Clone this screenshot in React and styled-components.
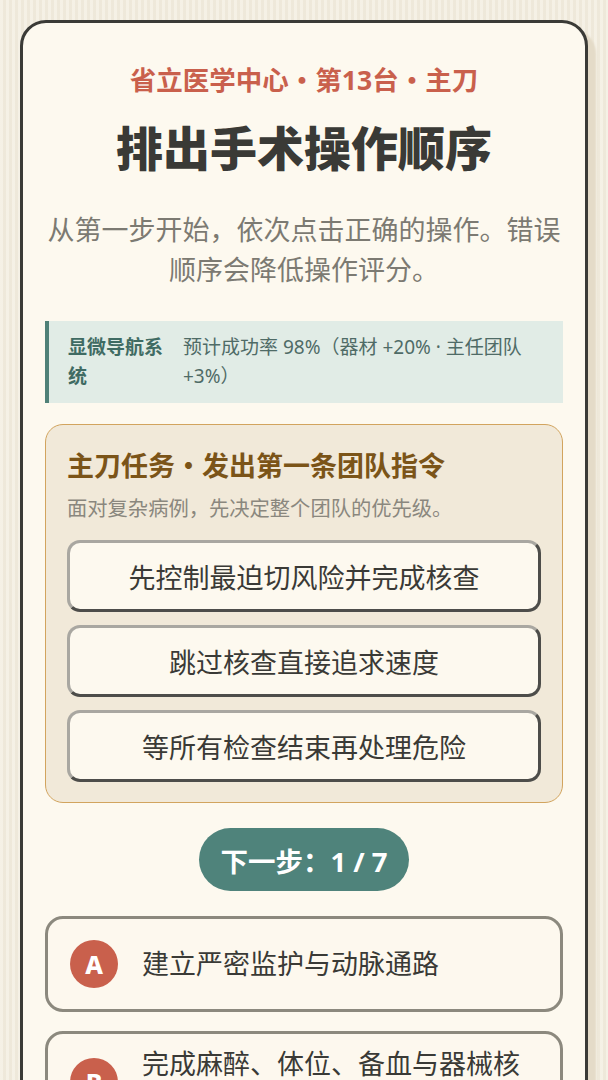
import React from 'react';
import styled, { createGlobalStyle } from 'styled-components';

const GlobalStyle = createGlobalStyle`
  * { box-sizing: border-box; }
  body {
    margin: 0;
    font-family: "Noto Sans", "Noto Sans CJK SC", sans-serif;
    background-color: #f2ecdd;
    background-image: repeating-linear-gradient(90deg, rgba(255,255,255,0.25) 0 3px, rgba(0,0,0,0.015) 3px 6px);
  }
`;

const Page = styled.div`
  padding: 20px 20px 40px;
`;

const Card = styled.main`
  background: #fdf9ef;
  border: 3px solid #3b3b37;
  border-radius: 26px;
  box-shadow: 8px 8px 2px #e4dbc8;
  padding: 40px 22px 30px;
`;

const Kicker = styled.div`
  text-align: center;
  color: #c9604c;
  font-weight: 700;
  font-size: 26.5px;
  line-height: 35px;
`;

const Title = styled.h1`
  margin: 20px 0 0;
  text-align: center;
  color: #3a3a36;
  font-weight: 900;
  font-size: 47px;
  line-height: 61px;
`;

const Lead = styled.p`
  margin: 31px 0 0;
  text-align: center;
  color: #7c7a72;
  font-size: 27px;
  line-height: 40px;
`;

const InfoBox = styled.div`
  margin-top: 31px;
  display: flex;
  gap: 15px;
  background: #e1ece6;
  border-left: 4px solid #4f8178;
  padding: 12px 16px 12px 19px;
  font-size: 19px;
  line-height: 29px;
`;

const InfoLabel = styled.div`
  flex: 0 0 100px;
  font-weight: 700;
  color: #3f6b63;
`;

const InfoValue = styled.div`
  flex: 1;
  color: #4f6b66;
`;

const TaskBox = styled.section`
  margin-top: 21px;
  background: #f1e9d9;
  border: 1.5px solid #d2a45e;
  border-radius: 18px;
  padding: 23px 21px 20px;
`;

const TaskTitle = styled.h2`
  margin: 0;
  color: #7b5418;
  font-weight: 700;
  font-size: 27px;
  line-height: 36px;
`;

const TaskHint = styled.p`
  margin: 10px 0 0;
  color: #8a877e;
  font-size: 20.3px;
  line-height: 28px;
`;

const ChoiceList = styled.div`
  margin-top: 18px;
  display: flex;
  flex-direction: column;
  gap: 13px;
`;

const Choice = styled.button`
  height: 72px;
  width: 100%;
  background: #fdf9ef;
  border: 3px solid;
  border-color: #a9a7a1 #4d4d4a #4d4d4a #a9a7a1;
  border-radius: 13px;
  font-family: inherit;
  font-size: 27px;
  color: #3a3a36;
  cursor: pointer;
`;

const PillRow = styled.div`
  margin-top: 25px;
  display: flex;
  justify-content: center;
`;

const NextPill = styled.div`
  width: 210px;
  height: 63px;
  border-radius: 32px;
  background: #4f837b;
  color: #fff;
  font-weight: 700;
  font-size: 27.5px;
  display: flex;
  align-items: center;
  justify-content: center;
`;

const StepList = styled.div`
  margin-top: 25px;
  display: flex;
  flex-direction: column;
  gap: 19px;
`;

const Step = styled.div`
  min-height: 96px;
  border: 3px solid #8c897e;
  border-radius: 18px;
  background: #fdf8ee;
  display: flex;
  align-items: center;
  gap: 24px;
  padding: 12px 22px;
`;

const Badge = styled.span`
  flex: 0 0 48px;
  height: 48px;
  border-radius: 50%;
  background: #c9604c;
  color: #fff;
  font-weight: 800;
  font-size: 25px;
  display: flex;
  align-items: center;
  justify-content: center;
`;

const StepText = styled.span`
  font-size: 27px;
  line-height: 36px;
  color: #3a3a36;
`;

const choices = [
  '先控制最迫切风险并完成核查',
  '跳过核查直接追求速度',
  '等所有检查结束再处理危险',
];

const steps = [
  { key: 'A', text: '建立严密监护与动脉通路' },
  { key: 'B', text: '完成麻醉、体位、备血与器械核查' },
  { key: 'C', text: '显微导航下精准切除病灶' },
];

const App = () => {
  return (
    <Page>
      <GlobalStyle />
      <Card>
        <Kicker>省立医学中心・第13台・主刀</Kicker>
        <Title>排出手术操作顺序</Title>
        <Lead>从第一步开始，依次点击正确的操作。错误顺序会降低操作评分。</Lead>
        <InfoBox>
          <InfoLabel>显微导航系统</InfoLabel>
          <InfoValue>预计成功率 98%（器材 +20% · 主任团队 +3%）</InfoValue>
        </InfoBox>
        <TaskBox>
          <TaskTitle>主刀任务・发出第一条团队指令</TaskTitle>
          <TaskHint>面对复杂病例，先决定整个团队的优先级。</TaskHint>
          <ChoiceList>
            {choices.map((c) => (
              <Choice key={c}>{c}</Choice>
            ))}
          </ChoiceList>
        </TaskBox>
        <PillRow>
          <NextPill>下一步：1 / 7</NextPill>
        </PillRow>
        <StepList>
          {steps.map((s) => (
            <Step key={s.key}>
              <Badge>{s.key}</Badge>
              <StepText>{s.text}</StepText>
            </Step>
          ))}
        </StepList>
      </Card>
    </Page>
  );
};

export default App;
